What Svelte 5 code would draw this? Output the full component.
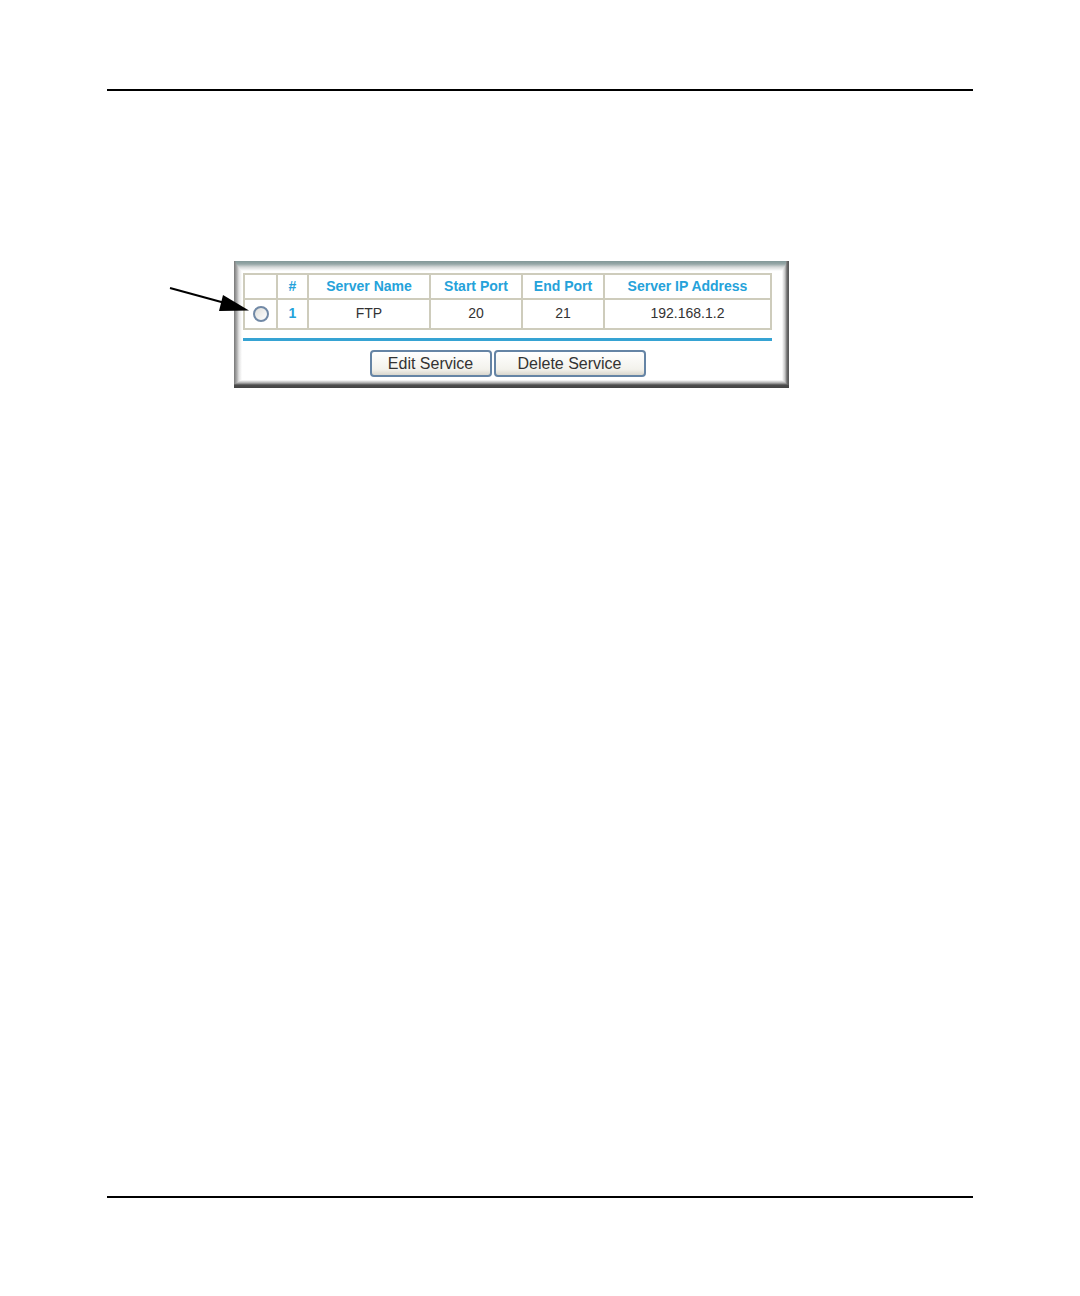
<script>
  const servers = [{ id: 1, name: 'FTP', start: 20, end: 21, ip: '192.168.1.2' }];
  let selected = $state(null);
</script>

<div class="page">
  <main>
    <section class="panel" aria-label="Port forwarding services">
      <svg class="arrow" viewBox="0 0 82 28" aria-hidden="true">
        <path d="M1 2L56 17" fill="none" stroke="#000" stroke-width="2" />
        <path d="M54 9L80 24.500L50 25Z" fill="#000" />
      </svg>
      <table>
        <colgroup>
          <col class="pick" /><col class="num" /><col class="name" /><col class="start" /><col class="end" /><col />
        </colgroup>
        <thead>
          <tr>
            <td></td>
            <th scope="col">#</th>
            <th scope="col">Server Name</th>
            <th scope="col">Start Port</th>
            <th scope="col">End Port</th>
            <th scope="col">Server IP Address</th>
          </tr>
        </thead>
        <tbody>
          {#each servers as server}
            <tr>
              <td><input type="radio" name="server" value={server.id} bind:group={selected} aria-label={server.name} /></td>
              <th scope="row">{server.id}</th>
              <td>{server.name}</td>
              <td>{server.start}</td>
              <td>{server.end}</td>
              <td>{server.ip}</td>
            </tr>
          {/each}
        </tbody>
      </table>
      <hr />
      <div class="actions">
        <button class="edit" type="button">Edit Service</button>
        <button class="delete" type="button">Delete Service</button>
      </div>
    </section>
  </main>
</div>

<style>
  :global(body) {
    margin: 0;
    background: #fff;
  }
  .page {
    box-sizing: border-box;
    min-height: 100vh;
    display: flex;
    padding: 89px 107px 98px;
    font-family: "Liberation Sans", Arial, sans-serif;
  }
  main {
    flex: 1;
    border-top: 2px solid #000;
    border-bottom: 2px solid #000;
    padding: 170px 184px 0 127px;
  }
  .panel {
    position: relative;
    box-sizing: border-box;
    padding: 12px 17px 11px 9px;
    background:
      linear-gradient(to bottom, #829898 0, #96a6a6 3px, #d4d7d7 6px, #fff 10px),
      linear-gradient(to right, #777 0, #b0b0b0 3px, #e2e2e2 5px, #fff 8px),
      linear-gradient(to left, #555 0, #6c6c6c 2px, #c4c4c4 4px, #fff 7px),
      linear-gradient(to top, #444 0, #4c4c4c 3px, #aaa 5px, #fff 8px);
    background-blend-mode: darken;
  }
  .arrow {
    position: absolute;
    left: -65px;
    top: 25px;
    width: 82px;
    height: 28px;
  }
  table {
    width: 100%;
    table-layout: fixed;
    border-collapse: collapse;
    background: #fff;
    font-size: 14px;
    line-height: 16px;
    text-align: center;
    color: #333;
  }
  .pick {
    width: 33px;
  }
  .num {
    width: 31px;
  }
  .name {
    width: 122px;
  }
  .start {
    width: 92px;
  }
  .end {
    width: 82px;
  }
  th,
  td {
    height: 21px;
    padding: 0 0 2px;
    border: 2px solid #ceccbc;
  }
  tbody th,
  tbody td {
    height: 26px;
  }
  th {
    color: #25a2da;
  }
  input {
    appearance: none;
    display: block;
    box-sizing: border-box;
    width: 16px;
    height: 16px;
    margin: 2px auto 0;
    border: 2px solid #7189a6;
    border-radius: 50%;
    background: linear-gradient(135deg, #dededa, #fff);
  }
  input:checked {
    background: radial-gradient(circle, #35a835 3px, #fff 4px);
  }
  hr {
    height: 3px;
    margin: 8px 0 9px;
    border: 0;
    background: #36a3d3;
  }
  .actions {
    display: flex;
    justify-content: center;
    gap: 2px;
  }
  button {
    height: 27px;
    padding: 0;
    border: 2px solid #6584a5;
    border-radius: 4px;
    background: linear-gradient(#fff, #f3f2ec 75%, #d9d7ce);
    color: #333;
    font: 16px/20px "Liberation Sans", Arial, sans-serif;
  }
  .edit {
    width: 122px;
  }
  .delete {
    width: 152px;
  }
</style>
